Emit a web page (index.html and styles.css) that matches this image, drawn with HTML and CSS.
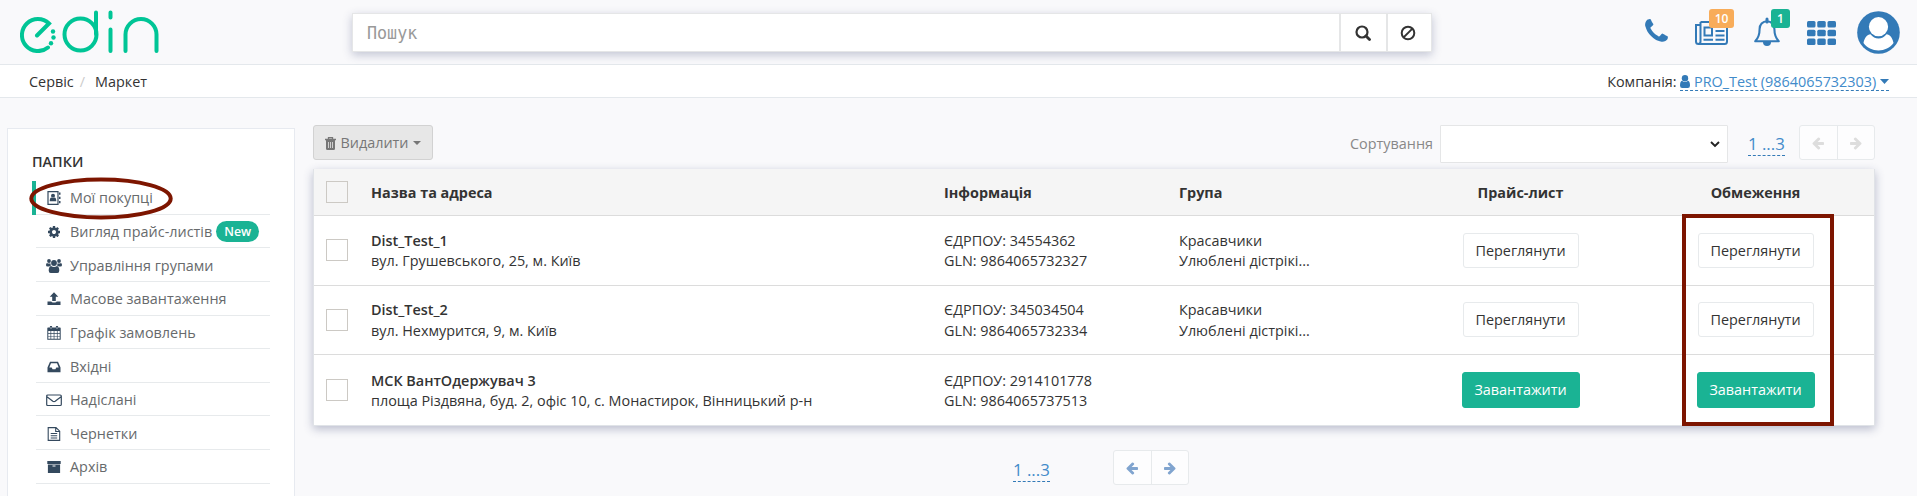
FILE: index.html
```html
<!DOCTYPE html>
<html lang="uk">
<head>
<meta charset="utf-8">
<title>Маркет</title>
<link rel="stylesheet" href="styles.css">
</head>
<body>
<svg class="defs" width="0" height="0">
  <symbol id="left" viewBox="0 0 1792 1792"><path d="M1664 896v128q0 53-32.5 90.5t-84.5 37.5h-704l293 294q38 36 38 90t-38 90l-75 76q-37 37-90 37-52 0-91-37l-651-652q-37-37-37-90 0-52 37-91l651-650q38-38 91-38 52 0 90 38l75 74q38 38 38 91t-38 91l-293 293h704q52 0 84.5 37.5t32.5 90.5z"/></symbol>
</svg>
<header class="header">
  <svg class="logo" width="140" height="44" viewBox="0 0 140 44" fill="none" stroke="#00c596" stroke-width="4" stroke-linecap="round">
    <path d="M17 26.500L29 14.500A16 16 0 1 0 28 38.500"/>
    <circle cx="60.500" cy="25.500" r="16"/><path d="M76 3.500V25M90.500 3.500V8.500M90.500 20.500V42M105.500 42V25.500A15.500 15.500 0 0 1 136.500 25.500V42"/>
    <g fill="#00c596" stroke="none"><circle cx="33" cy="22.500" r="2.200"/><circle cx="33.500" cy="28.500" r="2.200"/><circle cx="31" cy="34.200" r="2.200"/></g>
  </svg>
  <form class="search">
    <input class="search-input" type="text" placeholder="Пошук">
    <button class="search-btn" type="button"><svg width="16" height="16" viewBox="0 0 16 16" fill="none" stroke="#333" stroke-width="2.200"><circle cx="7" cy="7" r="5.500"/><path d="M11 11l3.500 3.500" stroke-width="2.800" stroke-linecap="round"/></svg></button>
    <button class="search-btn last" type="button"><svg width="16" height="16" viewBox="0 0 16 16" fill="none" stroke="#333" stroke-width="2"><circle cx="8" cy="8" r="6.300"/><path d="M3.600 12.400l8.800-8.800"/></svg></button>
  </form>
  <nav class="tools">
    <svg class="phone" width="29" height="29" viewBox="0 0 1792 1792" fill="#337ab7"><path d="M1600 1240q0 27-10 70.500t-21 68.500q-21 50-122 106-94 51-186 51-27 0-53-3.500t-57.500-12.500-47-14.500-55.500-20.500-49-18q-98-35-175-83-127-79-264-216t-216-264q-48-77-83-175-3-9-18-49t-20.500-55.500-14.500-47-12.500-57.500-3.500-53q0-92 51-186 56-101 106-122 25-11 68.500-21t70.500-10q14 0 21 3 18 6 53 76 11 19 30 54t35 63.500 31 53.500q3 4 17.500 25t21.500 35.500 7 28.500q0 20-28.500 50t-62 55-62 53-28.500 46q0 9 5 22.500t8.500 20.500 14 24 11.500 19q76 137 174 235t235 174q2 1 19 11.500t24 14 20.500 8.500 22.500 5q18 0 46-28.500t53-62 55-62 50-28.500q14 0 28.500 7t35.500 21.500 25 17.500q25 15 53.500 31t63.500 35 54 30q70 35 76 53 3 7 3 21z"/></svg>
    <span class="tool news"><svg width="33" height="24" viewBox="0 0 33 24" fill="none" stroke="#337ab7" stroke-width="2"><path d="M5.500 1H32V20.500A2.500 2.500 0 0 1 29.500 23H3.500A2.500 2.500 0 0 1 1 20.500V4H5.500M5.500 1V20.500A2.300 2.300 0 0 1 3.300 23"/><path d="M9.500 6.500H17V14.500H9.500ZM8.500 18.800H18M20.500 5.500H29.500M20.500 10H29.500M20.500 14.500H29.500M20.500 18.800H29.500"/></svg><b class="count orange">10</b></span>
    <span class="tool bell"><svg width="28" height="30" viewBox="0 0 28 30"><path d="M14 4.200C9.500 4.200 6.600 7.500 6.600 12C6.600 18 5 21.500 2.200 24.200H25.800C23 21.500 21.400 18 21.400 12C21.400 7.500 18.500 4.200 14 4.200Z" fill="none" stroke="#337ab7" stroke-width="2.100" stroke-linejoin="round"/><path d="M14 2V5" stroke="#337ab7" stroke-width="3" stroke-linecap="round"/><path d="M10 25H18A4 4 0 0 1 10 25Z" fill="#337ab7"/></svg><b class="count green">1</b></span>
    <svg class="apps" width="29" height="24" viewBox="0 0 29 24" fill="#337ab7"><rect width="8.500" height="6.500" rx="1.500"/><rect x="10.250" width="8.500" height="6.500" rx="1.500"/><rect x="20.500" width="8.500" height="6.500" rx="1.500"/><rect y="8.700" width="8.500" height="6.500" rx="1.500"/><rect x="10.250" y="8.700" width="8.500" height="6.500" rx="1.500"/><rect x="20.500" y="8.700" width="8.500" height="6.500" rx="1.500"/><rect y="17.400" width="8.500" height="6.500" rx="1.500"/><rect x="10.250" y="17.400" width="8.500" height="6.500" rx="1.500"/><rect x="20.500" y="17.400" width="8.500" height="6.500" rx="1.500"/></svg>
    <svg class="avatar" width="43" height="43" viewBox="0 0 43 43"><circle cx="21.500" cy="21.500" r="21.300" fill="#337ab7"/><circle cx="21.500" cy="15.700" r="9.600" fill="#fff"/><path d="M6.500 32C7.500 26.500 10 23.500 13.500 23.200C15.500 26 18.500 27.500 21.500 27.500S27.500 26 29.500 23.200C33 23.500 35.500 26.500 36.500 32C33 36.700 27.500 39.500 21.500 39.500S10 36.700 6.500 32Z" fill="#fff"/></svg>
  </nav>
</header>
<div class="crumbs">
  <span>Сервіс</span><i class="slash">/</i><span>Маркет</span>
  <div class="company">Компанія: <a class="link dashed"><svg width="10" height="13" viewBox="0 0 10 13" fill="#337ab7"><circle cx="5" cy="3.200" r="3.200"/><path d="M2 5.800Q5 8.300 8 5.800Q10 6.500 10 10.500Q10 13 7.800 13H2.200Q0 13 0 10.500Q0 6.500 2 5.800Z"/></svg> PRO_Test (9864065732303) <svg class="caret" width="9" height="5" viewBox="0 0 9 5" fill="#337ab7"><path d="M0 0H9L4.500 5Z"/></svg></a></div>
</div>
<div class="layout">
  <aside class="side">
    <h2 class="side-title">ПАПКИ</h2>
    <ul class="menu">
      <li class="item active"><svg class="ico" viewBox="0 0 14 14"><path d="M1 .600H11V13.400H1Z" fill="none" stroke="#34495e" stroke-width="1.200"/><circle cx="6" cy="4.700" r="2"/><path d="M2.700 10.300Q2.700 6.500 4.500 6.500Q6 7.600 7.500 6.500Q9.300 6.500 9.300 10.300ZM12 1.500h1.500v2.200H12zM12 5.800h1.500V8H12zM12 10h1.500v2.200H12z"/></svg>Мої покупці<svg class="ellipse" width="144" height="43" viewBox="0 0 144 43"><ellipse cx="72" cy="21.500" rx="69.700" ry="19" fill="none" stroke="#7d1500" stroke-width="4"/></svg></li>
      <li class="item"><svg class="ico" viewBox="0 0 1792 1792"><path d="M1152 896q0-106-75-181t-181-75-181 75-75 181 75 181 181 75 181-75 75-181zm512-109v222q0 12-8 23t-20 13l-185 28q-19 54-39 91 35 50 107 138 10 12 10 25t-9 23q-27 37-99 108t-94 71q-12 0-26-9l-138-108q-44 23-91 38-16 136-29 186-7 28-36 28h-222q-14 0-24.500-8.500t-11.500-21.500l-28-184q-49-16-90-37l-141 107q-10 9-25 9-14 0-25-11-126-114-165-168-7-10-7-23 0-12 8-23 15-21 51-66.500t54-70.500q-27-50-41-99l-183-27q-13-2-21-12.500t-8-23.500v-222q0-12 8-23t19-13l186-28q14-46 39-92-40-57-107-138-10-12-10-24 0-10 9-23 26-36 98.500-107.500t94.500-71.500q13 0 26 10l138 107q44-23 91-38 16-136 29-186 7-28 36-28h222q14 0 24.500 8.500t11.500 21.500l28 184q49 16 90 37l142-107q9-9 24-9 13 0 25 10 129 119 165 170 7 8 7 22 0 12-8 23-15 21-51 66.500t-54 70.500q26 50 41 98l183 28q13 2 21 12.500t8 23.500z"/></svg>Вигляд прайс-листів<b class="new">New</b></li>
      <li class="item"><svg class="ico wide" viewBox="0 0 16 14"><circle cx="3" cy="2" r="1.900"/><circle cx="13" cy="2" r="1.900"/><circle cx="8" cy="4" r="2.900"/><path d="M1 4Q2.800 5 4.400 4.200Q4.500 5.800 5.300 6.600Q4 6.700 3.300 7.500H1.500Q0 7.500 0 6Q0 4.300 1 4ZM15 4Q13.200 5 11.600 4.200Q11.500 5.800 10.700 6.600Q12 6.700 12.700 7.500H14.500Q16 7.500 16 6Q16 4.300 15 4ZM5 7Q8 9 11 7Q13.300 7.500 13.300 11.500Q13.300 14 11.300 14H4.700Q2.700 14 2.700 11.500Q2.700 7.500 5 7Z"/></svg>Управління групами</li>
      <li class="item"><svg class="ico" viewBox="0 0 14 14"><path d="M7 .300L11.300 4.700H8.800V9H5.200V4.700H2.700ZM.500 9.500H4.300Q4.800 10.600 6 10.600H8Q9.200 10.600 9.700 9.500H13.500V13H.500Z"/></svg>Масове завантаження</li>
      <li class="item"><svg class="ico" viewBox="0 0 14 14"><path d="M1 1.500H13Q13.700 1.500 13.700 2.300V13.700H.3V2.300Q.300 1.500 1 1.500ZM1.300 5V7.100H3.500V5ZM4.200 5V7.100H6.700V5ZM7.400 5V7.100H9.900V5ZM10.600 5V7.100H12.700V5ZM1.300 7.800V9.900H3.500V7.800ZM4.200 7.800V9.900H6.700V7.800ZM7.400 7.800V9.900H9.900V7.800ZM10.600 7.800V9.900H12.700V7.800ZM1.300 10.600V12.700H3.500V10.600ZM4.200 10.600V12.700H6.700V10.600ZM7.400 10.600V12.700H9.900V10.600ZM10.600 10.600V12.700H12.700V10.600Z" fill-rule="evenodd"/><path d="M4 .800V3M10 .800V3" stroke="#34495e" stroke-width="2.200" stroke-linecap="round"/><path d="M4 .900V3M10 .900V3" stroke="#fff" stroke-width=".600"/></svg>Графік замовлень</li>
      <li class="item"><svg class="ico" viewBox="0 0 14 14"><path d="M3 1.800H11L13.500 7.500V12.300H.500V7.500ZM4 3.200L2.300 7.500H4.700L5.600 9.300H8.400L9.300 7.500H11.700L10 3.200Z" fill-rule="evenodd"/></svg>Вхідні</li>
      <li class="item"><svg class="ico wide" viewBox="0 0 16 14" ><path d="M1.800 2H14.200Q15.300 2 15.300 3V11.500Q15.300 12.500 14.200 12.500H1.800Q.700 12.500 .700 11.500V3Q.700 2 1.800 2ZM.900 3.800Q5 6.800 6.800 8.300Q8 9 9.200 8.300Q11 6.800 15.100 3.800" fill="none" stroke="#34495e" stroke-width="1.200"/></svg>Надіслані</li>
      <li class="item"><svg class="ico" viewBox="0 0 14 14"><path d="M1.200 .600H9L12.700 4.200V13.400H1.200ZM8.700 .600V4.500H12.700M3.700 6.500H10.200M3.700 8.700H10.200M3.700 11H10.200" fill="none" stroke="#34495e" stroke-width="1.100"/></svg>Чернетки</li>
      <li class="item"><svg class="ico" viewBox="0 0 14 14"><path d="M.300 1H13.700V4H.300ZM.900 4.600H13.100V13H.900ZM5.500 5.600V6.500H8.500V5.600Z" fill-rule="evenodd"/></svg>Архів</li>
    </ul>
  </aside>
  <main class="main">
    <div class="toolbar">
      <button class="delete" type="button"><svg width="11" height="13" viewBox="0 0 11 13"><path d="M3.500 2V.7H7.500V2M0 2.500H11" fill="none" stroke="#777" stroke-width="1.300"/><path d="M1 3H10V11.500Q10 13 8.700 13H2.300Q1 13 1 11.500Z" fill="#777"/><path d="M3.500 5V11M5.500 5V11M7.500 5V11" stroke="#e7e7e7" stroke-width=".8"/></svg><span>Видалити</span><svg class="caret" width="8" height="4" viewBox="0 0 8 4" fill="#777"><path d="M0 0H8L4 4Z"/></svg></button>
      <label class="sort-label">Сортування</label>
      <div class="select"><svg width="10" height="7" viewBox="0 0 10 7" fill="none" stroke="#222" stroke-width="1.900"><path d="M1 1l4 4 4-4"/></svg></div>
      <a class="link range dashed">1 ...3</a>
      <div class="pager disabled"><span class="page"><svg width="14" height="14"><use href="#left"/></svg></span><span class="page"><svg class="flip" width="14" height="14"><use href="#left"/></svg></span></div>
    </div>
    <section class="table">
      <div class="row head"><i class="check"></i><span>Назва та адреса</span><span>Інформація</span><span>Група</span><span class="mid">Прайс-лист</span><span class="mid">Обмеження</span></div>
      <div class="row"><i class="check"></i><div><b class="name">Dist_Test_1</b><br>вул. Грушевського, 25, м. Київ</div><div>ЄДРПОУ: 34554362<br>GLN: 9864065732327</div><div>Красавчики<br>Улюблені дістрікі...</div><div class="mid"><button class="btn" type="button">Переглянути</button></div><div class="mid"><button class="btn" type="button">Переглянути</button></div></div>
      <div class="row"><i class="check"></i><div><b class="name">Dist_Test_2</b><br>вул. Нехмурится, 9, м. Київ</div><div>ЄДРПОУ: 345034504<br>GLN: 9864065732334</div><div>Красавчики<br>Улюблені дістрікі...</div><div class="mid"><button class="btn" type="button">Переглянути</button></div><div class="mid"><button class="btn" type="button">Переглянути</button></div></div>
      <div class="row"><i class="check"></i><div><b class="name">МСК ВантОдержувач 3</b><br>площа Різдвяна, буд. 2, офіс 10, с. Монастирок, Вінницький р-н</div><div>ЄДРПОУ: 2914101778<br>GLN: 9864065737513</div><div></div><div class="mid"><button class="btn primary" type="button">Завантажити</button></div><div class="mid"><button class="btn primary" type="button">Завантажити</button></div></div>
      <div class="frame"></div>
    </section>
    <div class="bottom"><a class="link range dashed">1 ...3</a><div class="pager"><span class="page"><svg width="14" height="14"><use href="#left"/></svg></span><span class="page"><svg class="flip" width="14" height="14"><use href="#left"/></svg></span></div></div>
  </main>
</div>
</body>
</html>
```
FILE: styles.css
```css
* { box-sizing: border-box; }
body { margin: 0; width: 1917px; height: 496px; overflow: hidden; background: #f9f9fb; color: #333; font: 14.4px/20px "Open Sans", sans-serif; }
.defs { position: absolute; }
svg { flex: none; }
button { font: inherit; margin: 0; }
.header { height: 65px; border-bottom: 1px solid #e4e8ec; display: flex; align-items: flex-start; padding: 9px 17px 0 20px; }
.search { display: flex; width: 1080px; height: 39px; margin: 4px 0 0 192px; background: #fff; border: 1px solid #e5e6e7; box-shadow: 0 3px 9px rgba(50, 60, 110, .28); }
.search-input { flex: 1; min-width: 0; border: 0; background: none; padding: 0 0 2px 14px; font: 16.7px "DejaVu Sans Mono", monospace; outline: 0; transform: scaleY(1.1); }
.search-input::placeholder { color: #999; opacity: 1; }
.search-btn { width: 47px; padding: 0 2px 0 0; border: 0; border-left: 2px solid #e5e6e7; background: #fff; display: flex; align-items: center; justify-content: center; }
.search-btn.last { width: 45px; padding-right: 4px; }
.tools { margin-left: auto; display: flex; align-items: flex-start; }
.phone { margin: 8px 0 0; }
.tool { position: relative; display: flex; }
.news { margin: 12px 0 0 24px; }
.bell { margin: 8px 0 0 25px; }
.apps { margin: 12px 0 0 26px; }
.avatar { margin: 2px 0 0 21px; }
.count { position: absolute; height: 19px; border-radius: 3px; color: #fff; font-size: 12px; font-weight: 600; line-height: 19px; text-align: center; }
.orange { left: 14px; top: -12px; width: 25px; background: #f8ac59; }
.green { left: 18px; top: -8px; width: 19px; background: #1ab394; }
.crumbs { height: 33px; background: #fff; border-bottom: 1px solid #e4e8ec; display: flex; align-items: center; padding: 2px 28px 0 29px; }
.slash { color: #ccc; font-style: normal; margin: 0 10px 0 6px; }
.company { margin-left: auto; }
.link { color: #428bca; }
.dashed { display: inline-block; border-bottom: 1px dashed #337ab7; }
.company .link { line-height: 17px; }
.company svg:first-child { vertical-align: -1px; }
.caret { vertical-align: 3px; }
.layout { display: flex; align-items: flex-start; }
.side { width: 288px; height: 380px; margin: 30px 0 0 7px; background: #fff; border: 1px solid #e7eaf0; padding: 23px 24px 0; }
.side-title { margin: 0 0 9px 0; font-size: 14.4px; line-height: 20px; font-weight: 600; }
.menu { list-style: none; margin: 0; padding: 0 0 0 4px; }
.item { position: relative; height: 33.65px; display: flex; align-items: center; padding: 2px 0 0 10px; border-bottom: 1px solid #e7eaec; color: #676a6c; }
.active { box-shadow: -4px 0 #1ab394; }
.ico { width: 14px; height: 14px; margin: 0 9px 0 1px; fill: #34495e; }
.wide { width: 16px; margin: 0 8px 0 0; }
.ellipse { position: absolute; left: -7px; top: -4px; z-index: 2; }
.new { margin: -1px 0 0 4px; width: 43px; height: 21px; border-radius: 11px; background: #1ab394; color: #fff; font-size: 12.4px; font-weight: 600; line-height: 21px; text-align: center; }
.main { width: 1562px; margin: 27px 0 0 18px; }
.toolbar { height: 44px; display: flex; align-items: flex-start; }
.delete { width: 120px; height: 35px; border: 1px solid #d2d2d2; border-radius: 3px; background: #e7e7e7; color: #777; display: flex; align-items: center; justify-content: center; gap: 4px; padding: 1px 0 0; }
.sort-label { margin: 9px 7px 0 auto; color: #888; }
.select { width: 288px; height: 38px; border: 1px solid #e5e6e7; border-radius: 1px; background: #fff; display: flex; align-items: center; justify-content: flex-end; padding-right: 7px; }
.range { width: 37px; font-size: 16.8px; line-height: 22px; white-space: nowrap; }
.toolbar .range { margin: 8px 14px 0 20px; }
.pager { display: flex; width: 76px; height: 35px; border: 1px solid #e7eaec; border-radius: 3px; background: #fdfdfe; }
.page { flex: 1; display: flex; align-items: center; justify-content: center; fill: #80a4cf; }
.page + .page { border-left: 1px solid #e7eaec; }
.disabled .page { fill: #ddd; }
.flip { transform: scaleX(-1); }
.table { position: relative; height: 257px; border: 1px solid #e0e3e7; border-top: 0; background: #fff; box-shadow: 0 3px 9px rgba(50, 60, 110, .32); }
.row { display: grid; grid-template-columns: 57px 573px 235px 224px 235px 1fr; align-items: center; height: 69.65px; border-bottom: 1px solid #dcdcdc; line-height: 20.5px; }
.row > div:not(.mid), .head > span { padding-top: 2px; }
.row:nth-last-child(2) { border-bottom: 0; }
.head { height: 47px; background: #f5f5f5; font-weight: 700; }
.check { width: 22px; height: 22px; margin-left: 12px; border: 1px solid #ccc9c4; }
.name { font-weight: 600; }
.mid { display: flex; justify-content: center; }
.row > .mid:last-of-type { padding-right: 1px; }
.btn { height: 35px; width: 116px; border: 1px solid #e7eaec; border-radius: 3px; background: #fff; color: #333; padding: 1px 0 0; }
.primary { width: 118px; height: 36px; border-color: #1ab394; background: #1ab394; color: #fff; }
.frame { position: absolute; left: 1368px; top: 45px; width: 152px; height: 212px; border: 4px solid #7d1500; }
.bottom { display: flex; align-items: flex-start; padding: 24px 0 0 700px; }
.bottom .range { margin: 9px 63px 0 0; }
```
